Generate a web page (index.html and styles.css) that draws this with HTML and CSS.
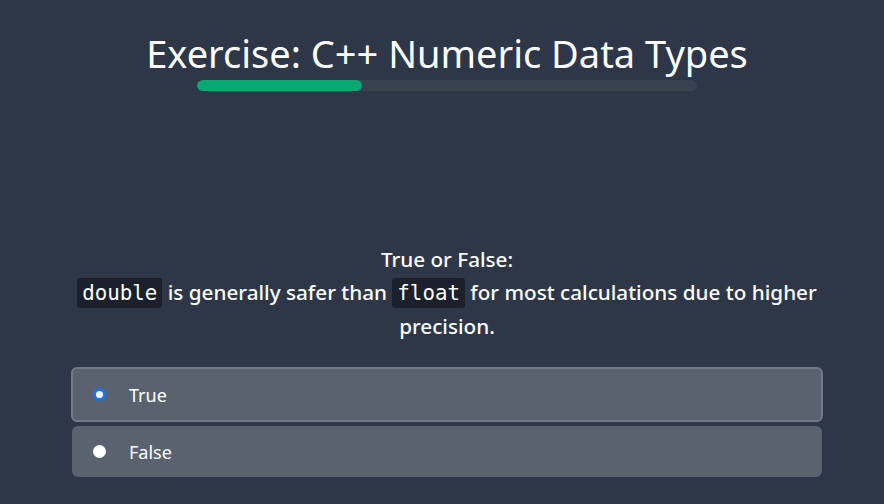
FILE: index.html
```html
<!DOCTYPE html>
<html lang="en">
<head>
<meta charset="utf-8">
<title>Exercise</title>
<link rel="stylesheet" href="styles.css">
</head>
<body>
<div class="page">
  <h1 class="title">Exercise: C++ Numeric Data Types</h1>
  <div class="progress"><div class="progress-fill" style="width:33%"></div></div>
  <div class="question">
    <p class="q-head">True or False:</p>
    <p class="q-body"><code>double</code> is generally safer than <code>float</code> for most calculations due to higher precision.</p>
  </div>
  <div class="options">
    <label class="option selected"><span class="radio checked"></span><span class="opt-text">True</span></label>
    <label class="option"><span class="radio"></span><span class="opt-text">False</span></label>
  </div>
</div>
</body>
</html>
```
FILE: styles.css
```css
html, body {
  margin: 0;
  padding: 0;
  background: #2d3748;
  height: 100%;
  overflow: hidden;
}
.page {
  display: flex;
  flex-direction: column;
  align-items: center;
  padding-left: 10px;
  font-family: "Noto Sans", "Open Sans", sans-serif;
  color: #ffffff;
}
.title {
  margin: 29px 0 0;
  font-size: 38px;
  font-weight: 400;
  line-height: 48px;
  letter-spacing: 0;
}
.progress {
  width: 500px;
  height: 11px;
  margin-top: 3px;
  border-radius: 6px;
  background: #394350;
  overflow: hidden;
}
.progress-fill {
  height: 100%;
  background: #07a872;
  border-radius: 6px;
}
.question {
  width: 752px;
  margin-top: 152px;
  text-align: center;
  font-size: 20.7px;
  font-weight: 500;
  line-height: 33px;
}
.q-head, .q-body {
  margin: 0;
}
code {
  font-family: "DejaVu Sans Mono", monospace;
  font-size: 20.8px;
  font-weight: 400;
  background: #1a202c;
  padding: 3px 5px;
  border-radius: 3px;
}
.options {
  width: 750px;
  margin-top: 24px;
  display: flex;
  flex-direction: column;
  gap: 4px;
}
.option {
  display: flex;
  align-items: center;
  height: 51px;
  padding-left: 21px;
  box-sizing: border-box;
  background: #5a6270;
  border-radius: 6px;
  font-size: 18px;
}
.option.selected {
  margin: 0 -1px;
  height: 55px;
  padding-left: 20px;
  border: 2px solid #737a87;
}
.radio {
  width: 13px;
  height: 13px;
  border-radius: 50%;
  background: #ffffff;
  box-sizing: border-box;
}
.radio.checked {
  border: 3px solid #1a73f0;
}
.opt-text {
  margin-left: 23px;
}
```
